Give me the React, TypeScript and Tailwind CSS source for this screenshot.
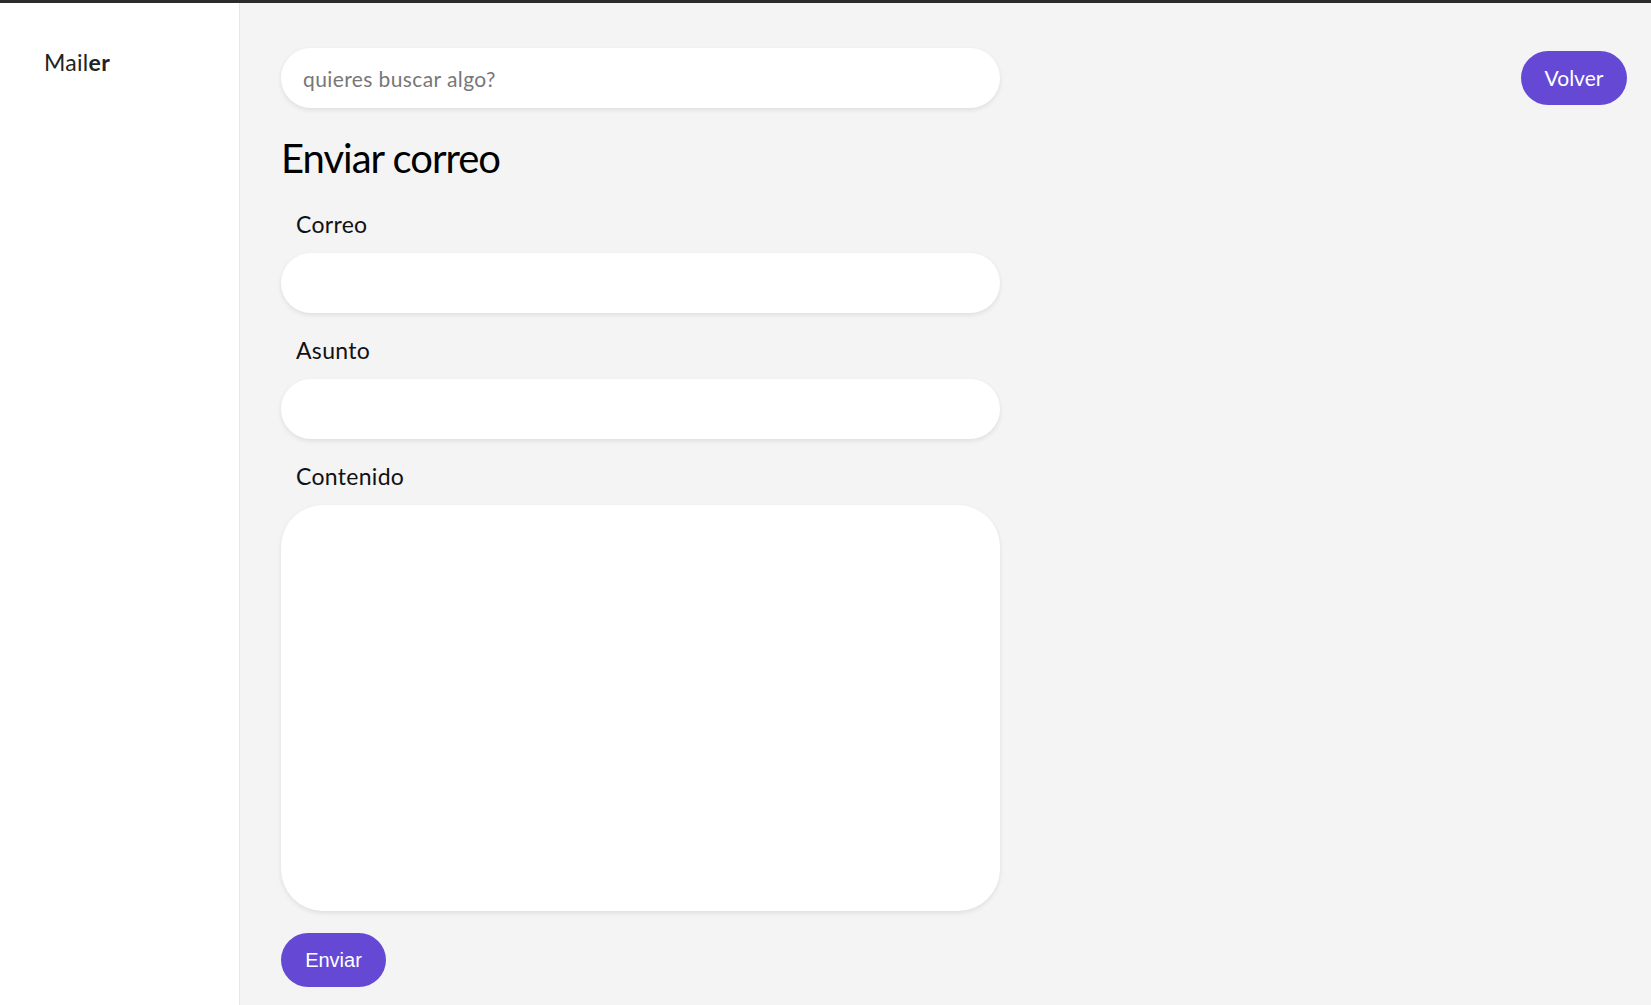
import React from "react";

export default function App() {
  const font = { fontFamily: "Lato, 'Noto Sans', sans-serif" };
  return (
    <div className="w-[1651px] h-[1005px] flex flex-col bg-[#f4f4f4] overflow-hidden" style={font}>
      <div className="h-[3px] bg-[#2b2b2b] shrink-0" />
      <div className="flex flex-1">
        <aside className="w-[240px] shrink-0 bg-white border-r border-[#e8e8e8] pl-[44px] pt-[46px]">
          <div className="text-[23px] leading-[26px] text-[#222] tracking-[0.3px]">
            Mail<span className="font-bold">er</span>
          </div>
        </aside>
        <main className="flex-1 pl-[41px] pr-[24px] pt-[45px]">
          <div className="flex items-start justify-between">
            <div className="w-[719px]">
              <input
                placeholder="quieres buscar algo?"
                className="w-full h-[60px] rounded-full bg-white px-[22px] text-[21px] tracking-[0.4px] text-[#333] placeholder-[#777] outline-none shadow-[0_2px_5px_rgba(0,0,0,0.09)]"
                style={font}
              />
              <h1 className="mt-[26px] text-[40px] leading-[48px] font-normal tracking-[-1px] text-black">Enviar correo</h1>

              <label className="block mt-[30px] px-[15px] text-[23px] leading-[24px] tracking-[0.3px] text-[#111]">Correo</label>
              <input
                className="mt-[17px] w-full h-[60px] rounded-full bg-white px-[22px] text-[20px] outline-none shadow-[0_2px_5px_rgba(0,0,0,0.09)]"
                style={font}
              />

              <label className="block mt-[25px] px-[15px] text-[23px] leading-[24px] tracking-[0.3px] text-[#111]">Asunto</label>
              <input
                className="mt-[17px] w-full h-[60px] rounded-full bg-white px-[22px] text-[20px] outline-none shadow-[0_2px_5px_rgba(0,0,0,0.09)]"
                style={font}
              />

              <label className="block mt-[25px] px-[15px] text-[23px] leading-[24px] tracking-[0.3px] text-[#111]">Contenido</label>
              <textarea
                className="block mt-[17px] w-full h-[406px] rounded-[42px] bg-white px-[22px] py-[16px] text-[20px] outline-none resize-none shadow-[0_2px_5px_rgba(0,0,0,0.09)]"
                style={font}
              />

              <button
                className="mt-[22px] h-[54px] w-[105px] rounded-full bg-[#6549d5] text-white text-[20px]"
                style={{ fontFamily: "'Liberation Sans', Arial, sans-serif" }}
              >
                Enviar
              </button>
            </div>
            <button className="mt-[3px] h-[54px] w-[106px] rounded-full bg-[#6549d5] text-white text-[21px]" style={font}>
              Volver
            </button>
          </div>
        </main>
      </div>
    </div>
  );
}
